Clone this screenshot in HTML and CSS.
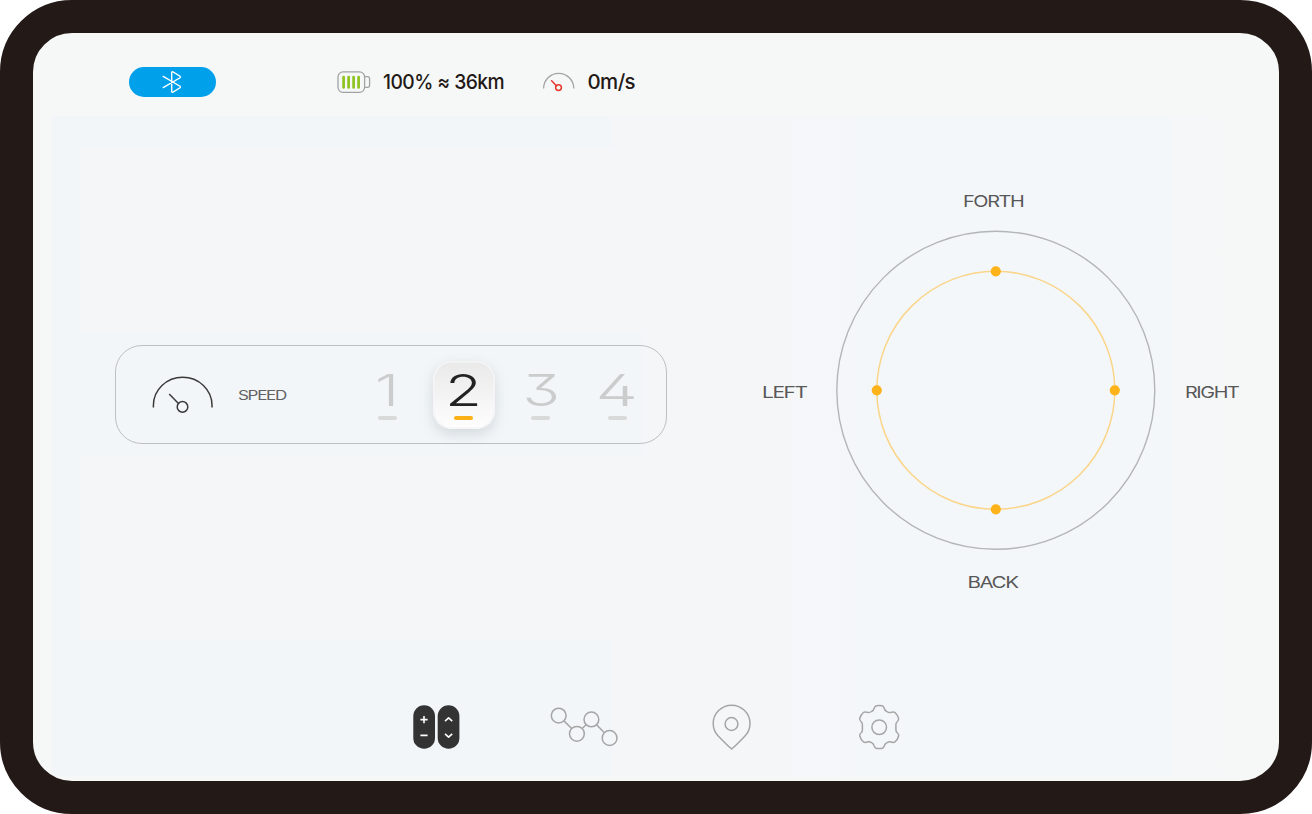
FILE: index.html
```html
<!DOCTYPE html>
<html lang="en">
<head>
<meta charset="utf-8">
<title>Remote control</title>
<link rel="stylesheet" href="styles.css">
</head>
<body>
<div class="device">
  <header class="status">
    <div class="bluetooth">
      <svg width="20" height="24" viewBox="0 0 20 24"><path d="M1.2 6.4 L18 16.2 Q18.8 17 18 17.8 L11 22.2 Q9.9 22.6 9.7 21.4 V2.6 Q9.9 1.4 11 1.8 L18 6.2 Q18.8 7 18 7.8 L1.2 17.6"/></svg>
    </div>
    <div class="battery">
      <svg width="34" height="24" viewBox="0 0 34 24"><rect class="line" x="1" y="1.9" width="26.6" height="20.4" rx="5"/><path class="line" d="M27.6 6.7h3Q32.6 6.7 32.6 9v6q0 2.3-2 2.3h-3"/><path class="cells" d="M6.6 7v10.4M11.6 7v10.4M16.6 7v10.4M21.6 7v10.4"/></svg>
      <svg class="reading" width="126" height="30"><text x="0" y="22" textLength="121" lengthAdjust="spacingAndGlyphs">100% ≈ 36km</text></svg>
    </div>
    <div class="velocity">
      <svg width="32" height="22" viewBox="0 0 32 22"><path class="line" d="M.6 17.5a15.1 15.1 0 0 1 30.2 0"/><path class="needle" d="M8.6 9.8l5 5.2"/><circle class="needle" cx="15.5" cy="16.6" r="2.9"/></svg>
      <svg class="reading" width="54" height="30"><text x="-0.5" y="22" textLength="47.5" lengthAdjust="spacingAndGlyphs">0m/s</text></svg>
    </div>
  </header>

  <main class="controls">
    <section class="speed">
      <svg class="gauge" width="62" height="40" viewBox="0 0 62 40"><path d="M1.4 32.5V30.3a29.2 28 0 0 1 58.6 0V32.5M17.2 19.1l9 9.2"/><circle cx="30.5" cy="31.9" r="5.3"/></svg>
      <svg class="speed-label" width="54" height="20"><text x="0" y="15" textLength="48" lengthAdjust="spacingAndGlyphs">SPEED</text></svg>
      <div class="levels">
        <div class="level"><svg width="56" height="54"><text x="16" y="44" textLength="24" lengthAdjust="spacingAndGlyphs">1</text></svg><i></i></div>
        <div class="level active"><svg width="56" height="54"><text x="9.3" y="44" textLength="36.5" lengthAdjust="spacingAndGlyphs">2</text></svg><i></i></div>
        <div class="level"><svg width="56" height="54"><text x="9.5" y="44" textLength="37.5" lengthAdjust="spacingAndGlyphs">3</text></svg><i></i></div>
        <div class="level"><svg width="56" height="54"><text x="6.5" y="44" textLength="42.5" lengthAdjust="spacingAndGlyphs">4</text></svg><i></i></div>
      </div>
    </section>

    <section class="pad">
      <svg class="forth" width="66" height="24"><text x="0" y="17.5" textLength="60.5" lengthAdjust="spacingAndGlyphs">FORTH</text></svg>
      <svg class="left" width="52" height="24"><text x="0" y="19.5" textLength="44.5" lengthAdjust="spacingAndGlyphs">LEFT</text></svg>
      <svg class="dial" width="320" height="320" viewBox="0.2 -0.3 320 320"><circle class="outer" cx="160" cy="160" r="159"/><circle class="inner" cx="160" cy="160" r="119"/><circle class="dot" cx="160" cy="41" r="5.1"/><circle class="dot" cx="41" cy="160" r="5.1"/><circle class="dot" cx="279" cy="160" r="5.1"/><circle class="dot" cx="160" cy="279" r="5.1"/></svg>
      <svg class="right" width="62" height="24"><text x="0" y="19.5" textLength="53.5" lengthAdjust="spacingAndGlyphs">RIGHT</text></svg>
      <svg class="back" width="58" height="24"><text x="0.5" y="20.5" textLength="50" lengthAdjust="spacingAndGlyphs">BACK</text></svg>
    </section>
  </main>

  <nav class="tabs">
    <svg class="remote" width="48" height="46" viewBox="0 0 48 46"><rect x="1.3" y="1.3" width="21.7" height="43.4" rx="10.8"/><rect x="25.7" y="1.3" width="21.7" height="43.4" rx="10.8"/><path d="M8.4 15.6h7.2M12 12v7.2M8.4 31.4h7.2M33 17.2l3.6-3.3 3.6 3.3M33 29.8l3.6 3.3 3.6-3.3"/></svg>
    <svg class="outline" width="70" height="46" viewBox="0.5 0 70 46"><circle cx="9.2" cy="11.6" r="7.4"/><circle cx="27.4" cy="29.8" r="7.4"/><circle cx="41.9" cy="15.4" r="7.4"/><circle cx="60.1" cy="34" r="7.4"/><path d="M14.5 16.9l7.6 7.6M32.7 24.5l3.9-3.8M47.1 20.7l7.8 8"/></svg>
    <svg class="outline" width="40" height="46" viewBox="0 0 40 46"><path d="M19.7 45Q17.8 44 6.2 32.1Q1.2 26.8 1.2 19.6a18.4 18.4 0 0 1 36.8 0Q38 26.8 33 32.1Q21.5 44 19.7 45z"/><circle cx="19.5" cy="20" r="6.4"/></svg>
    <svg class="outline" width="44" height="46" viewBox="0 0 44 46"><path d="M19.5 1.8Q22.3 1.4 25.1 1.8Q26.6 2.2 27.2 4.2Q27.8 6.6 29.8 7.5Q31.8 8.9 33.8 8.4Q36.7 7.5 38 8.5Q40.6 11 41.6 14.5Q42 16.2 40 18Q38.8 19 38.9 21V25.5Q38.8 27.5 40 28.5Q42 30 41.7 31.8Q40.8 35.5 38.1 37.8Q36.7 38.9 34.2 38Q32 37.3 30 38.6Q27.9 39.6 27.2 42Q26.5 44 25 44.4Q22.3 44.8 19.5 44.4Q17.9 44 17.2 42Q16.6 39.7 14.6 38.6Q12.3 37.3 10.2 38Q7.8 38.9 6.4 37.8Q3.7 35.5 2.7 31.8Q2.4 30 4.4 28.5Q5.5 27.5 5.4 25.5V21Q5.5 19 4.4 18Q2.3 16.2 2.7 14.5Q3.7 10.8 6.4 8.5Q7.7 7.5 10.5 8.4Q12.5 8.9 14.6 7.5Q16.5 6.6 17.2 4.2Q17.8 2.2 19.5 1.8z"/><circle cx="22.2" cy="23.2" r="7.3"/></svg>
  </nav>
</div>
</body>
</html>
```

FILE: styles.css
```css
* { box-sizing: border-box; }
body { margin: 0; background: #fff; font-family: Inter, "Liberation Sans", sans-serif; }
svg { display: block; flex: none; overflow: visible; }

.device {
  width: 1312px; height: 814px;
  display: grid; grid-template-rows: 98px 518px 132px;
  border: 33px solid #231916; border-radius: 72px;
  background:
    linear-gradient(#f5f6f8, #f5f6f8) 47px 115px / 535px 184px no-repeat,
    linear-gradient(#f5f6f8, #f5f6f8) 47px 423px / 535px 184px no-repeat,
    linear-gradient(#f2f6f9, #f2f6f9) 47px 299px / 562px 124px no-repeat,
    linear-gradient(90deg, #f2f6f9 0 561px, #f5f6f8 561px 730px, #f3f7fa 850px) 19px 83px / 1119px 660px no-repeat,
    linear-gradient(90deg, #f6f7f9, #f6f8f7) 1138px 83px / 90px 660px no-repeat,
    #f6f8f7;
  background-origin: padding-box;
  overflow: hidden;
}

.status { display: flex; align-items: center; padding-left: 96px; }
.bluetooth {
  width: 86.5px; height: 30px; margin-right: 121px;
  display: flex; align-items: center; justify-content: center;
  border-radius: 15px; background: #00a0ea;
}
.bluetooth path { fill: none; stroke: #fff; stroke-width: 1.4; stroke-linecap: round; }
.battery, .velocity { display: flex; align-items: center; }
.battery { gap: 12px; margin-right: 34px; }
.velocity { gap: 13px; }
.line { fill: none; stroke: #a2a4a4; stroke-width: 1.3; }
.cells { stroke: #8fc31f; stroke-width: 2.7; stroke-linecap: round; }
.needle { fill: none; stroke: #e8382f; stroke-width: 1.5; stroke-linecap: round; }
.reading text { font-size: 20.5px; font-weight: 500; letter-spacing: -0.6px; fill: #231916; }

.controls { display: flex; align-items: center; padding-left: 82px; }
.speed {
  width: 552px; height: 99px; margin-top: 9px;
  display: flex; align-items: center; padding-left: 36px;
  border: 1.5px solid #bfc0c0; border-radius: 27px;
}
.gauge { fill: none; stroke: #3a3a39; stroke-width: 1.5; }
.speed-label { margin-left: 24px; fill: #636161; }
.speed-label text { font-size: 13px; letter-spacing: -1px; }
.levels { display: flex; gap: 14.8px; margin-left: 64px; }
.level {
  width: 62px; height: 68px; padding-top: 1px;
  display: flex; flex-direction: column; align-items: center;
  border-radius: 19px; fill: #cbcccc;
}
.level text { font-size: 43px; font-weight: 300; font-feature-settings: "cv02", "cv09"; }
.level i { width: 19px; height: 4px; border-radius: 2px; background: #d8dada; }
.level.active {
  fill: #222;
  background: linear-gradient(#e9e9e9, #fefefe);
  box-shadow: inset 0 0 0 1.5px #f5f5f5, 0 5px 14px #59657033;
}
.level.active i { background: #fbb017; }

.pad {
  display: grid; grid-template-columns: 74px 320px 60px; grid-template-rows: 41px 320px 41px;
  align-items: center; margin-left: 94.5px;
}
.pad text { font-size: 16px; letter-spacing: -1.1px; fill: #595858; }
.forth { grid-area: 1 / 2; justify-self: center; align-self: start; }
.left { grid-area: 2 / 1; }
.dial { grid-area: 2 / 2; }
.right { grid-area: 2 / 3; margin-left: 29px; }
.back { grid-area: 3 / 2; justify-self: center; align-self: end; }
.outer { fill: none; stroke: #b4b5b6; stroke-width: 1.4; }
.inner { fill: none; stroke: #fad58a; stroke-width: 1.5; }
.dot { fill: #fdb319; }

.tabs { display: flex; padding: 55px 0 0 379px; }
.remote { fill: #333; margin-right: 90px; }
.remote path { fill: none; stroke: #fff; stroke-width: 1.6; stroke-linejoin: round; }
.outline { fill: none; stroke: #a5a5a5; stroke-width: 1.5; }
.outline:nth-child(2) { margin-right: 92px; }
.outline:nth-child(3) { margin-right: 105px; }
```
